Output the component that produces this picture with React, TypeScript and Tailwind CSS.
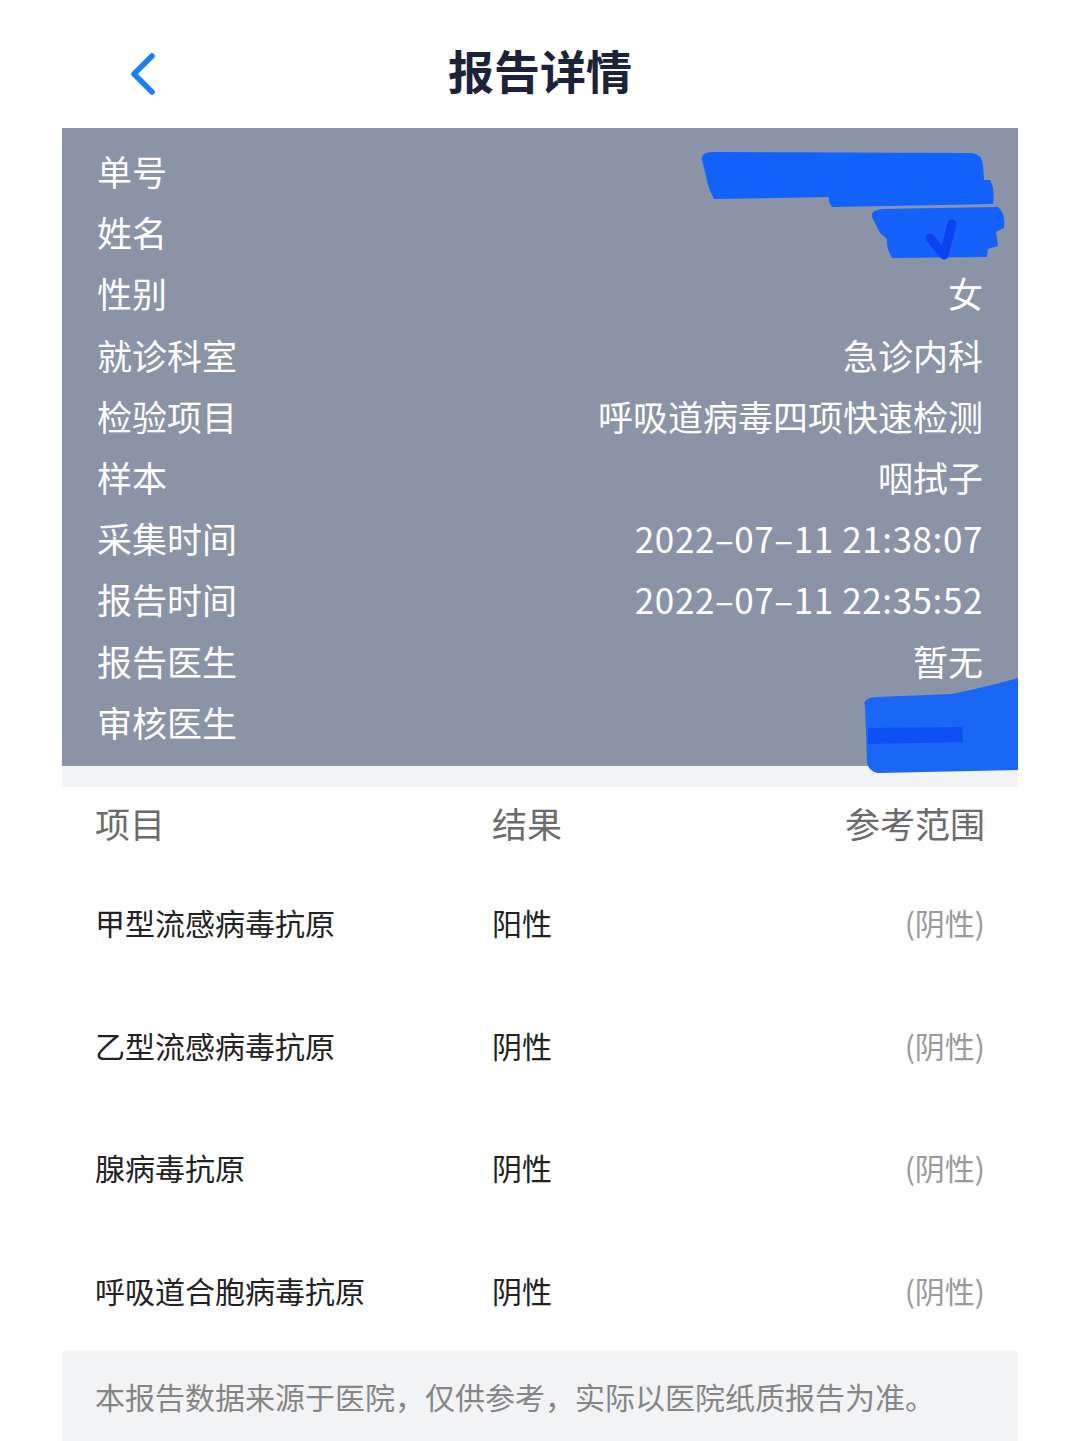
import React from "react";

const info: [string, string][] = [
  ["单号", ""],
  ["姓名", ""],
  ["性别", "女"],
  ["就诊科室", "急诊内科"],
  ["检验项目", "呼吸道病毒四项快速检测"],
  ["样本", "咽拭子"],
  ["采集时间", "2022–07–11 21:38:07"],
  ["报告时间", "2022–07–11 22:35:52"],
  ["报告医生", "暂无"],
  ["审核医生", ""],
];

const results: [string, string, string][] = [
  ["甲型流感病毒抗原", "阳性", "(阴性)"],
  ["乙型流感病毒抗原", "阴性", "(阴性)"],
  ["腺病毒抗原", "阴性", "(阴性)"],
  ["呼吸道合胞病毒抗原", "阴性", "(阴性)"],
];

export default function App() {
  return (
    <div
      className="relative w-[1080px] h-[1441px] overflow-hidden bg-white"
      style={{ fontFamily: '"Noto Sans CJK SC", "Noto Sans", sans-serif' }}
    >
      {/* Header */}
      <div className="relative h-[128px] flex items-center justify-center">
        <svg
          className="absolute left-[126px] top-[52px]"
          width="34"
          height="44"
          viewBox="0 0 34 44"
        >
          <path
            d="M26 4 L8 22 L26 40"
            fill="none"
            stroke="#1a7ff3"
            strokeWidth="5.5"
            strokeLinecap="round"
            strokeLinejoin="round"
          />
        </svg>
        <div className="text-[46px] font-bold text-[#1b2239] leading-none mt-[14px] pb-[4px]">
          报告详情
        </div>
      </div>

      {/* Info panel */}
      <div className="mx-[62px] bg-[#8a94a6] pt-[12px] pb-[14px] pl-[35px] pr-[35px] text-white">
        {info.map(([k, v]) => (
          <div
            key={k}
            className="flex justify-between items-center h-[61.2px] text-[35px] leading-none"
          >
            <span>{k}</span>
            <span className={v.startsWith("2022") ? "tracking-[0.6px]" : ""}>{v}</span>
          </div>
        ))}
      </div>
      <div className="mx-[62px] h-[21px] bg-[#f2f3f5]" />

      {/* Results table */}
      <div className="mx-[62px] pl-[33px] pr-[33px]">
        <div className="h-[74px] flex items-center text-[35px] text-[#6b6b6b] leading-none pb-[2px]">
          <span className="w-[397px]">项目</span>
          <span className="flex-1">结果</span>
          <span>参考范围</span>
        </div>
        {results.map(([name, res, range]) => (
          <div
            key={name}
            className="h-[122.5px] flex items-center text-[30px] leading-none"
          >
            <span className="w-[397px] text-[#222]">{name}</span>
            <span className="flex-1 text-[#222]">{res}</span>
            <span className="text-[#9a9a9a]">{range}</span>
          </div>
        ))}
      </div>

      {/* Footer note */}
      <div className="mx-[62px] h-[102px] bg-[#f2f3f5] pl-[33px] pt-[25px]">
        <div className="text-[30px] leading-[40px] text-[#858585]">
          本报告数据来源于医院，仅供参考，实际以医院纸质报告为准。
        </div>
      </div>

      {/* Redaction marks */}
      <svg
        className="absolute left-0 top-0 pointer-events-none"
        width="1080"
        height="1441"
        viewBox="0 0 1080 1441"
      >
        <path
          d="M702 160 Q700 152 714 152 L972 153 Q982 154 983 165 L984 180 L990 180 Q995 188 993 204 L832 207 Q828 202 829 197 L714 199 Q708 188 706 176 Z"
          fill="#1261fb"
        />
        <path
          d="M873 219 Q868 211 882 209 L998 207 Q1006 214 1004 228 L996 232 L998 246 L988 249 L987 257 L892 258 Q886 248 887 239 L880 233 Z"
          fill="#1462fb"
        />
        <path
          d="M930 238 L944 255 L952 224"
          fill="none"
          stroke="#0a44ef"
          strokeWidth="9"
          strokeLinecap="round"
          strokeLinejoin="round"
        />
        <path
          d="M865 706 Q862 698 876 697 L952 694 Q990 686 1018 678 L1018 770 L878 773 Q867 771 867 760 Z"
          fill="#1a66f5"
        />
        <path
          d="M868 728 L962 727 L963 742 L868 744 Z"
          fill="#0d4ff2"
        />
      </svg>
    </div>
  );
}
